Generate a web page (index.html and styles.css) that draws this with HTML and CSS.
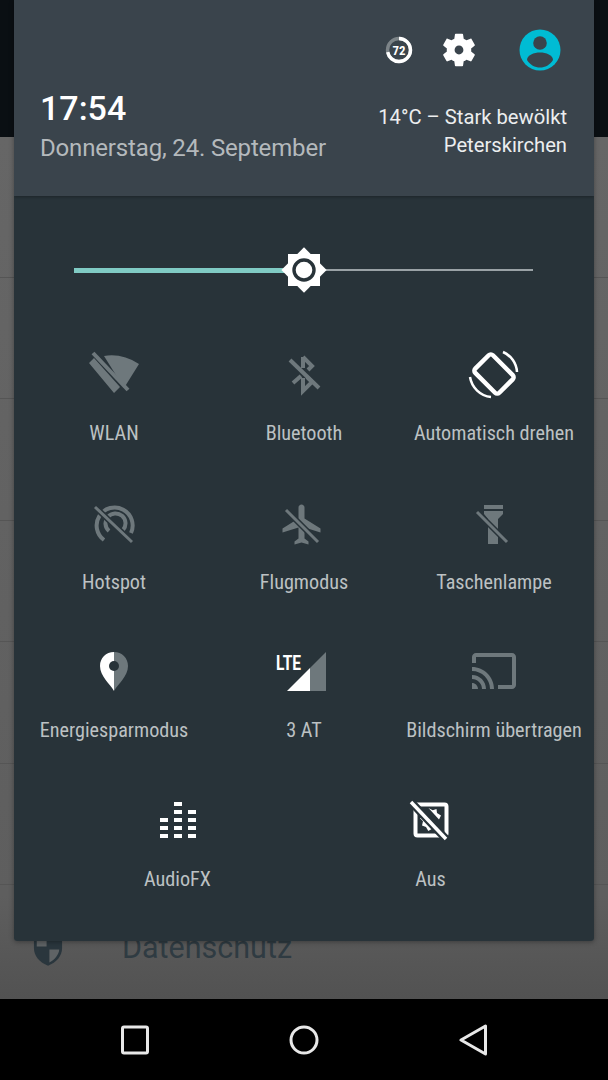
FILE: index.html
```html
<!DOCTYPE html>
<html lang="de">
<head>
  <meta charset="UTF-8">
  <meta name="viewport" content="width=device-width, initial-scale=1.0">
  <title>Schnelleinstellungen</title>
  <link rel="stylesheet" href="styles.css">
</head>
<body>

  <!-- page behind the shade -->
  <div class="screen">
    <div class="appbar"></div>
    <div class="settings">
      <div class="row row-first"></div>
      <div class="row"></div>
      <div class="row"></div>
      <div class="row"></div>
      <div class="row"></div>
      <div class="row"></div>
      <div class="row row-last">
        <svg class="shield" viewBox="0 0 32 40">
          <path class="shield-a" d="M16 1 L31 6 V20 C31 29 25 35 16 39 C7 35 1 29 1 20 V6 Z" />
          <path class="shield-b" d="M4 8 L14.5 4.5 V18.5 H4 Z M17.5 21.5 H28 C27.5 27 23.5 32 17.5 35.5 Z" />
        </svg>
        <span class="row-title">Datenschutz</span>
      </div>
    </div>
    <div class="navbar">
      <div class="nav-item">
        <svg class="nav-icon" viewBox="0 0 32 32"><rect x="3.5" y="3" width="25" height="26" rx="1.5" /></svg>
      </div>
      <div class="nav-item">
        <svg class="nav-icon" viewBox="0 0 32 32"><circle cx="16" cy="16" r="13" /></svg>
      </div>
      <div class="nav-item">
        <svg class="nav-icon" viewBox="0 0 32 32"><path d="M28.5 2 V30 L4 16 Z" /></svg>
      </div>
    </div>
  </div>

  <!-- quick settings panel -->
  <div class="panel">
    <header class="head">
      <div class="head-icons">
        <svg class="battery" viewBox="-14 -14 28 28">
          <circle class="battery-rest" r="11.5" />
          <circle class="battery-level" r="11.5" pathLength="100" stroke-dasharray="72 28" transform="rotate(-90)" />
          <text class="battery-text" y="4.6" text-anchor="middle" textLength="13" lengthAdjust="spacingAndGlyphs">72</text>
        </svg>
        <svg class="gear" viewBox="2 2 20 20">
          <path d="M19.14 12.94c.04-.3.06-.61.06-.94 0-.32-.02-.64-.07-.94l2.03-1.58c.18-.14.23-.41.12-.61l-1.92-3.32c-.12-.22-.37-.29-.59-.22l-2.39.96c-.5-.38-1.03-.7-1.62-.94l-.36-2.54c-.04-.24-.24-.41-.48-.41h-3.84c-.24 0-.43.17-.47.41l-.36 2.54c-.59.24-1.13.57-1.62.94l-2.39-.96c-.22-.08-.47 0-.59.22L2.74 8.87c-.12.21-.08.47.12.61l2.03 1.58c-.05.3-.09.63-.09.94s.02.64.07.94l-2.03 1.58c-.18.14-.23.41-.12.61l1.92 3.32c.12.22.37.29.59.22l2.39-.96c.5.38 1.03.7 1.62.94l.36 2.54c.05.24.24.41.48.41h3.84c.24 0 .44-.17.47-.41l.36-2.54c.59-.24 1.13-.56 1.62-.94l2.39.96c.22.08.47 0 .59-.22l1.92-3.32c.12-.22.07-.47-.12-.61l-2.01-1.58zM12 14.6c-1.43 0-2.6-1.17-2.6-2.6s1.17-2.6 2.6-2.6 2.6 1.17 2.6 2.6-1.17 2.6-2.6 2.6z" />
        </svg>
        <svg class="avatar" viewBox="-21 -21 42 42">
          <circle class="avatar-bg" r="20.5" />
          <circle class="avatar-fg" cy="-7" r="6.8" />
          <path class="avatar-fg" d="M-13 10 C-13 5 -6 2.5 0 2.5 C6 2.5 13 5 13 10 C10 15 5 17.5 0 17.5 C-5 17.5 -10 15 -13 10 Z" />
        </svg>
      </div>
      <div class="head-info">
        <div class="clock">
          <div class="time">17:54</div>
          <div class="date">Donnerstag, 24. September</div>
        </div>
        <div class="weather">
          <div>14°C – Stark bewölkt</div>
          <div>Peterskirchen</div>
        </div>
      </div>
    </header>

    <div class="body">
      <div class="slider">
        <div class="slider-fill"></div>
        <div class="slider-rest"></div>
        <svg class="thumb" viewBox="-23 -23 46 46">
          <rect class="thumb-star" x="-16" y="-16" width="32" height="32" />
          <rect class="thumb-star" x="-16" y="-16" width="32" height="32" transform="rotate(45)" />
          <circle class="thumb-ring" r="10" />
        </svg>
      </div>

      <div class="tiles">
        <div class="tile">
          <svg class="icon" viewBox="-32 -28 64 56">
            <path class="off" d="M-10 -17 Q8 -20 25 -9 L10 15 Z M-25 -10 L-20 -15 L6 14 L0 20 Z" />
            <path class="off-line" d="M-21 -20 L14 17" />
          </svg>
          <div class="label">WLAN</div>
        </div>
        <div class="tile">
          <svg class="icon" viewBox="-32 -28 64 56">
            <path class="off-stroke" d="M-1 -16 L8 -7 L4 -3 M-1 -16 V-5 M-1 5 V18 L8 9 L3 4 M-11 10 L-3 3" />
            <path class="off-line" d="M-14 -13 L15 15" />
          </svg>
          <div class="label">Bluetooth</div>
        </div>
        <div class="tile">
          <svg class="icon" viewBox="-32 -28 64 56">
            <rect class="on-stroke" x="-12.5" y="-17" width="25" height="34" rx="3" transform="translate(0 1) rotate(-45)" />
            <path class="on-thin" d="M9 -21 A23 23 0 0 1 23 -1 M-24 4 A24 24 0 0 0 -3 24" />
          </svg>
          <div class="label">Automatisch drehen</div>
        </div>

        <div class="tile">
          <svg class="icon" viewBox="-32 -28 64 56">
            <path class="off-stroke" d="M-10 17 A18 18 0 1 1 17 10 M-5 8 A10 10 0 1 1 9 7" />
            <path class="off-gap" d="M-19 -16 L18 19" />
            <path class="off-line thin" d="M-19 -16 L18 19" />
          </svg>
          <div class="label">Hotspot</div>
        </div>
        <div class="tile">
          <svg class="icon" viewBox="-32 -28 64 56">
            <path class="off" transform="translate(-25.5 -22.5) scale(2)" d="M21 16v-2l-8-5V3.5c0-.83-.67-1.5-1.5-1.5S10 2.67 10 3.5V9l-8 5v2l8-2.5V19l-2 1.5V22l3.5-1 3.5 1v-1.5L13 19v-5.5l8 2.5z" />
            <path class="off-gap" d="M-18 -13 L14 19" />
            <path class="off-line thin" d="M-18 -13 L14 19" />
          </svg>
          <div class="label">Flugmodus</div>
        </div>
        <div class="tile">
          <svg class="icon" viewBox="-32 -28 64 56">
            <path class="off" d="M-10 -18 H9 V-14 H-10 Z M-10 -12 H9 V-9 L4 -4 V21 H-6 V-4 L-10 -9 Z" />
            <path class="off-gap" d="M-17 -11 L13 19" />
            <path class="off-line thin" d="M-17 -11 L13 19" />
          </svg>
          <div class="label">Taschenlampe</div>
        </div>

        <div class="tile">
          <svg class="icon" viewBox="-32 -28 64 56">
            <path class="on" d="M0 -19 C-8 -19 -14 -13 -14 -5 C-14 5 -4 13 0 20 Z" />
            <path class="off" d="M0 -19 C8 -19 14 -13 14 -5 C14 5 4 13 0 20 Z" />
            <circle class="hole" cy="-5" r="5" />
          </svg>
          <div class="label">Energiesparmodus</div>
        </div>
        <div class="tile">
          <svg class="icon" viewBox="-32 -28 64 56">
            <text class="lte" x="-28" y="-1" textLength="25" lengthAdjust="spacingAndGlyphs">LTE</text>
            <path class="on" d="M-17 20 L6 -3 V20 Z" />
            <path class="off" d="M6 -3 L22 -19 V20 H6 Z" />
          </svg>
          <div class="label">3 AT</div>
        </div>
        <div class="tile">
          <svg class="icon" viewBox="-32 -28 64 56">
            <path class="off" transform="translate(-24 -24) scale(2)" d="M21 3H3c-1.1 0-2 .9-2 2v3h2V5h18v14h-7v2h7c1.1 0 2-.9 2-2V5c0-1.1-.9-2-2-2zM1 18v3h3c0-1.66-1.34-3-3-3zm0-4v2c2.76 0 5 2.24 5 5h2c0-3.87-3.13-7-7-7zm0-4v2c4.97 0 9 4.03 9 9h2c0-6.08-4.93-11-11-11z" />
          </svg>
          <div class="label">Bildschirm übertragen</div>
        </div>
      </div>

      <div class="tiles tiles-two">
        <div class="tile">
          <svg class="icon" viewBox="-32 -28 64 56">
            <path class="on" d="M-4 -18 H4 V-14 H-4 Z M-4 -10 H4 V-6 H-4 Z M-4 -2 H4 V2 H-4 Z M-4 6 H4 V10 H-4 Z M-4 14 H4 V18 H-4 Z M10 -10 H18 V-6 H10 Z M10 -2 H18 V2 H10 Z M10 6 H18 V10 H10 Z M10 14 H18 V18 H10 Z M-18 -2 H-10 V2 H-18 Z M-18 6 H-10 V10 H-18 Z M-18 14 H-10 V18 H-18 Z" />
          </svg>
          <div class="label">AudioFX</div>
        </div>
        <div class="tile">
          <svg class="icon" viewBox="-32 -28 64 56">
            <rect class="on-box" x="-15.5" y="-15.5" width="31" height="31" rx="2" />
            <path class="on" d="M-11 -1.7 L-5 -5.5 L7 8.3 L3.3 11 L.7 9 L-2.7 11 L-5 7 L-9 5.5 L-8 1.3 Z M-2.5 -12 L1.7 -9.8 L5.5 -11 L6 -7 L10 -4.5 L8 -.5 Z" />
            <path class="on-gap" d="M-20 -18 L15 19" />
            <path class="on-line" d="M-20 -18 L15 19" />
          </svg>
          <div class="label">Aus</div>
        </div>
      </div>
    </div>
  </div>

</body>
</html>
```

FILE: styles.css
```css
body {
  position: relative;
  width: 608px;
  height: 1080px;
  margin: 0;
  overflow: hidden;
  font-family: "Roboto Condensed", "Liberation Sans Narrow", Roboto, sans-serif;
}

.screen {
  display: flex;
  flex-direction: column;
  height: 1080px;
}

.appbar {
  height: 137px;
  background-color: #0a0f13;
}

.settings {
  flex: 1;
  overflow: hidden;
  background: linear-gradient(#666, #5e5e5e 88%, #525252);
}

.row {
  height: 121.6px;
  box-sizing: border-box;
  border-bottom: 1px solid #555;
}

.row-first {
  height: 140.5px;
}

.row-last {
  display: flex;
  align-items: center;
  border-bottom: 0;
  padding-left: 33px;
  padding-top: 2px;
}

.shield {
  width: 30px;
  height: 38px;
  margin-top: 2px;
}

.shield-a {
  fill: #2a363d;
}

.shield-b {
  fill: #5f6365;
}

.row-title {
  margin-left: 59px;
  font-family: Roboto, sans-serif;
  font-size: 30.5px;
  color: #2f3b42;
}

.navbar {
  display: flex;
  justify-content: center;
  align-items: center;
  height: 81px;
  background-color: #000;
}

.nav-item {
  display: flex;
  justify-content: center;
  width: 169px;
}

.nav-icon {
  width: 32px;
  height: 32px;
}

.nav-icon rect,
.nav-icon circle,
.nav-icon path {
  fill: none;
  stroke: #e8e8e8;
  stroke-width: 3;
  stroke-linejoin: round;
}

.panel {
  position: absolute;
  top: 0;
  left: 14px;
  display: flex;
  flex-direction: column;
  width: 580px;
  height: 941px;
  border-radius: 0 0 3px 3px;
  overflow: hidden;
  box-shadow: 0 1px 5px rgba(0, 0, 0, 0.35);
}

.head {
  height: 196px;
  box-sizing: border-box;
  padding: 29px 27px 0;
  background-color: #3a444c;
  box-shadow: 0 1px 3px rgba(0, 0, 0, 0.3);
  z-index: 1;
}

.head-icons {
  display: flex;
  align-items: center;
  justify-content: flex-end;
  height: 42px;
  padding-right: 6px;
}

.battery {
  width: 28px;
  height: 28px;
}

.battery-rest,
.battery-level {
  fill: none;
  stroke-width: 3.4;
}

.battery-rest {
  stroke: #7c8488;
}

.battery-level {
  stroke: #fff;
}

.battery-text {
  font-size: 13px;
  font-weight: bold;
  fill: #fff;
}

.gear {
  width: 34px;
  height: 34px;
  margin-left: 29px;
  fill: #fff;
}

.avatar {
  width: 42px;
  height: 42px;
  margin-left: 43px;
}

.avatar-bg {
  fill: #00bcd4;
}

.avatar-fg {
  fill: #3a444c;
}

.head-info {
  display: flex;
  justify-content: space-between;
  margin-top: 16px;
}

.clock {
  margin-left: -1px;
}

.time {
  font-family: Roboto, sans-serif;
  font-size: 34px;
  font-weight: 500;
  line-height: 42px;
  color: #fff;
}

.date {
  margin-top: 4px;
  font-family: Roboto, sans-serif;
  font-size: 24px;
  line-height: 30px;
  letter-spacing: -0.16px;
  color: #b4b9bc;
}

.weather {
  margin-top: 16px;
  font-family: Roboto, sans-serif;
  font-size: 20.2px;
  line-height: 28px;
  text-align: right;
  color: #eceeef;
}

.body {
  flex: 1;
  background-color: #283339;
}

.slider {
  position: relative;
  display: flex;
  align-items: center;
  height: 6px;
  margin: 71px 61px 0 60px;
}

.slider-fill {
  width: 211px;
  height: 5px;
  background-color: #80cbc4;
}

.slider-rest {
  flex: 1;
  height: 1.5px;
  background-color: #9aa2a6;
}

.thumb {
  position: absolute;
  top: -20px;
  left: 207px;
  width: 46px;
  height: 46px;
}

.thumb-star {
  fill: #fff;
}

.thumb-ring {
  fill: #fff;
  stroke: #283339;
  stroke-width: 3.4;
}

.tiles {
  display: grid;
  grid-template-columns: repeat(3, 190px);
  grid-auto-rows: 148.67px;
  justify-content: center;
  margin-top: 73px;
}

.tiles-two {
  grid-template-columns: repeat(2, 253px);
  margin-top: 0;
}

.tile {
  display: flex;
  flex-direction: column;
  align-items: center;
}

.tile:nth-child(-n+3) .icon {
  margin-top: -1px;
  margin-bottom: 1px;
}

.tiles-two .tile:nth-child(-n+3) .icon {
  margin-top: 0;
  margin-bottom: 0;
}

.icon {
  width: 64px;
  height: 56px;
  flex: none;
}

.label {
  margin-top: 19px;
  font-size: 20.2px;
  line-height: 24px;
  white-space: nowrap;
  color: #bcc1c3;
}

.on {
  fill: #fff;
}

.off {
  fill: #6e787c;
}

.hole {
  fill: #283339;
}

.off-line,
.off-stroke,
.off-gap,
.on-stroke,
.on-thin,
.on-box,
.on-gap,
.on-line {
  fill: none;
}

.off-line {
  stroke: #6e787c;
  stroke-width: 4;
}

.off-line.thin {
  stroke-width: 3;
}

.off-gap {
  stroke: #283339;
  stroke-width: 6;
}

.off-stroke {
  stroke: #6e787c;
  stroke-width: 4;
}

.on-stroke {
  stroke: #fff;
  stroke-width: 4.5;
}

.on-thin {
  stroke: #fff;
  stroke-width: 2.5;
}

.on-box {
  stroke: #fff;
  stroke-width: 4;
}

.on-gap {
  stroke: #283339;
  stroke-width: 8;
}

.on-line {
  stroke: #fff;
  stroke-width: 3.5;
}

.lte {
  font-family: "Liberation Sans Narrow", Roboto, sans-serif;
  font-size: 21px;
  font-weight: bold;
  fill: #fff;
}
```
